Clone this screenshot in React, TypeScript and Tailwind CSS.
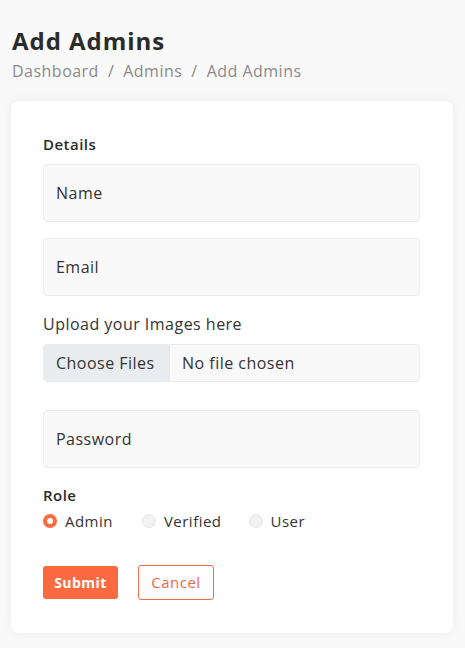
export default function App() {
  return (
    <div
      className="min-h-[648px] bg-[#f9f9f9] pl-[11px] pr-[12px] pt-[26px] pb-4 tracking-[0.03em]"
      style={{ fontFamily: '"Open Sans", "Liberation Sans", sans-serif' }}
    >
      {/* Header */}
      <h1 className="pl-px text-[24px] font-bold leading-[30px] tracking-[0.04em] text-[#2b2b2b]">
        Add Admins
      </h1>
      <div className="mt-[3px] flex items-center gap-[9px] pl-px text-[16px] leading-[24px] text-[#8a8a8a]">
        <span>Dashboard</span>
        <span>/</span>
        <span>Admins</span>
        <span>/</span>
        <span>Add Admins</span>
      </div>

      {/* Card */}
      <div className="mt-[18px] rounded-lg bg-white pl-8 pr-[33px] pt-[33px] pb-[33px] shadow-[0_0_12px_rgba(0,0,0,0.06)]">
        <div className="text-[15px] font-semibold leading-5 text-[#2b2b2b]">Details</div>

        <div className="mt-[10px] flex h-[58px] items-center rounded-[4px] border border-[#ececec] bg-[#f9f9f9] px-[12px] text-[16px] text-[#333]">
          Name
        </div>
        <div className="mt-4 flex h-[58px] items-center rounded-[4px] border border-[#ececec] bg-[#f9f9f9] px-[12px] text-[16px] text-[#333]">
          Email
        </div>

        <div className="mt-[16px] text-[16px] leading-6 text-[#333]">Upload your Images here</div>
        <div className="mt-[8px] flex h-[38px] items-stretch overflow-hidden rounded-[4px] border border-[#ececec] bg-[#f9f9f9] text-[16px] text-[#333]">
          <div className="flex w-[126px] items-center border-r border-[#e4e7ea] bg-[#e9ecef] px-[12px]">
            Choose Files
          </div>
          <div className="flex items-center px-3">No file chosen</div>
        </div>

        <div className="mt-[28px] flex h-[58px] items-center rounded-[4px] border border-[#ececec] bg-[#f9f9f9] px-[12px] text-[16px] text-[#333]">
          Password
        </div>

        <div className="mt-[17px] text-[15px] font-semibold leading-5 text-[#2b2b2b]">Role</div>
        <div className="mt-[5px] flex items-center text-[15px] text-[#333]">
          <label className="flex items-center gap-[8px]">
            <span className="h-[14px] w-[14px] rounded-full border-[4px] border-[#fd6a3f] bg-white" />
            Admin
          </label>
          <label className="ml-[29px] flex items-center gap-[8px]">
            <span className="h-[14px] w-[14px] rounded-full border border-[#e6e6e6] bg-[#f2f2f2]" />
            Verified
          </label>
          <label className="ml-[27px] flex items-center gap-[8px]">
            <span className="h-[14px] w-[14px] rounded-full border border-[#e6e6e6] bg-[#f2f2f2]" />
            User
          </label>
        </div>

        <div className="mt-[32px] flex items-center gap-5">
          <button className="h-[33px] w-[75px] rounded-[3px] bg-[#fd6a3f] text-[14px] font-bold text-white">
            Submit
          </button>
          <button className="h-[35px] w-[76px] rounded-[3px] border border-[#f06a4e] bg-white text-[15px] text-[#f0654a]">
            Cancel
          </button>
        </div>
      </div>
    </div>
  );
}
